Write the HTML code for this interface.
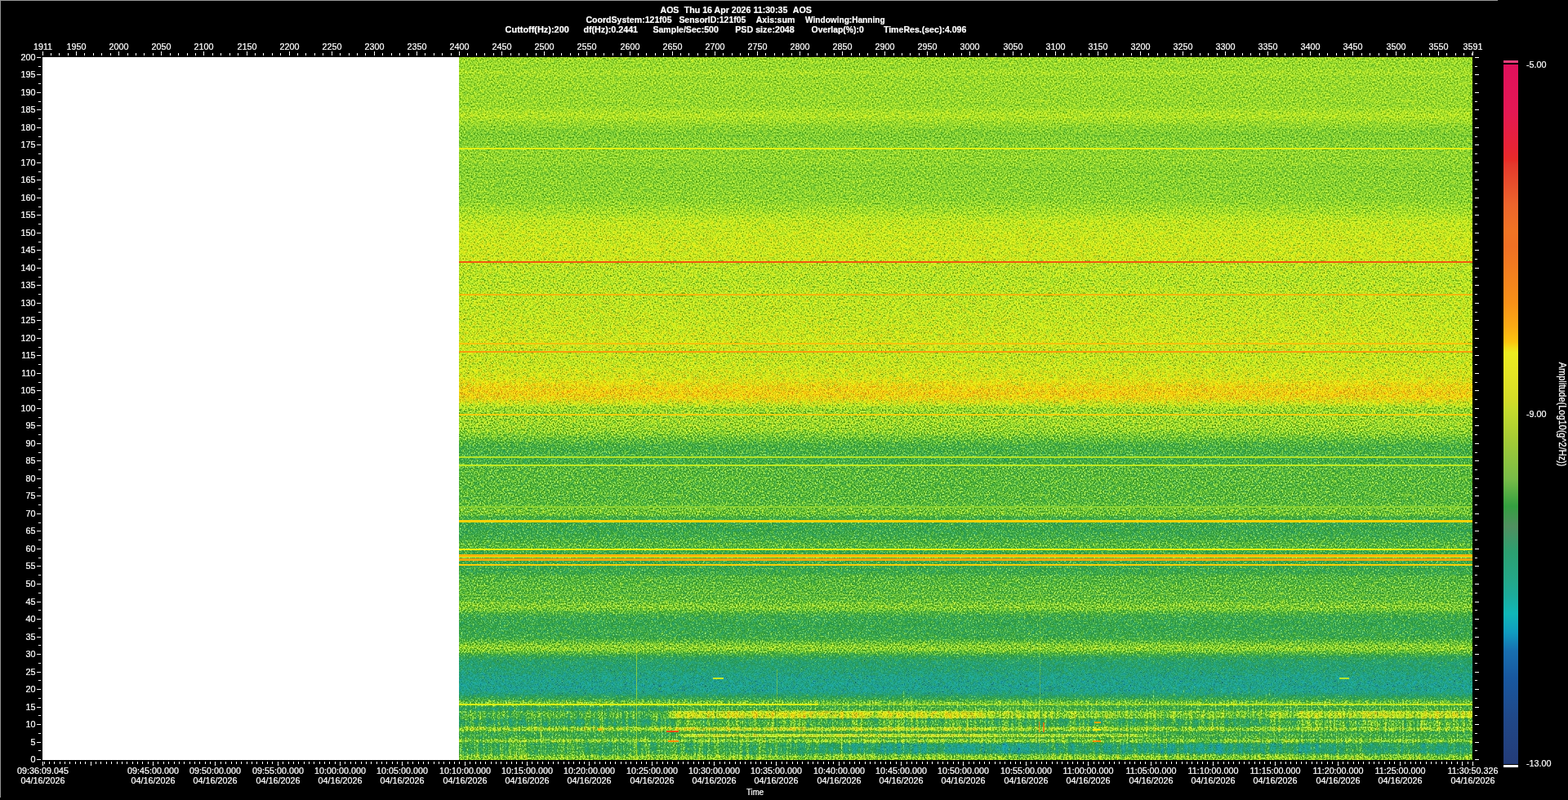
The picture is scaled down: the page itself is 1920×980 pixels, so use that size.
<!DOCTYPE html>
<html lang="en"><head><meta charset="utf-8"><title>AOS Spectrogram</title>
<style>html,body{margin:0;padding:0;background:#000;overflow:hidden}svg{display:block}text{font-family:"Liberation Sans",sans-serif;font-size:11px;fill:#fff;stroke:#fff;stroke-width:.22px}.b{font-weight:bold}.m{text-anchor:middle}.e{text-anchor:end}</style></head><body>
<svg width="1920" height="980" viewBox="0 0 1920 980">
<defs>
<linearGradient id="bg" gradientUnits="userSpaceOnUse" x1="0" y1="62" x2="0" y2="940">
<stop offset="0.0000" stop-color="#760099"/>
<stop offset="0.0091" stop-color="#76009a"/>
<stop offset="0.0262" stop-color="#75009a"/>
<stop offset="0.0308" stop-color="#77009b"/>
<stop offset="0.0376" stop-color="#75009b"/>
<stop offset="0.0774" stop-color="#74009d"/>
<stop offset="0.0911" stop-color="#78009e"/>
<stop offset="0.1025" stop-color="#73009e"/>
<stop offset="0.1173" stop-color="#6f009f"/>
<stop offset="0.1321" stop-color="#7000a0"/>
<stop offset="0.1515" stop-color="#7200a1"/>
<stop offset="0.1640" stop-color="#7000a1"/>
<stop offset="0.1913" stop-color="#7000a3"/>
<stop offset="0.2084" stop-color="#6f00a7"/>
<stop offset="0.2232" stop-color="#7000af"/>
<stop offset="0.2392" stop-color="#7200b9"/>
<stop offset="0.2711" stop-color="#6e00cc"/>
<stop offset="0.2916" stop-color="#6d00cf"/>
<stop offset="0.2995" stop-color="#6a00d0"/>
<stop offset="0.3166" stop-color="#6800d2"/>
<stop offset="0.3371" stop-color="#6800d5"/>
<stop offset="0.3451" stop-color="#6800d6"/>
<stop offset="0.3850" stop-color="#6800dc"/>
<stop offset="0.4077" stop-color="#6900df"/>
<stop offset="0.4226" stop-color="#6600e1"/>
<stop offset="0.4362" stop-color="#6600e3"/>
<stop offset="0.4556" stop-color="#6800e7"/>
<stop offset="0.4658" stop-color="#6b00ed"/>
<stop offset="0.4715" stop-color="#6d00f0"/>
<stop offset="0.4772" stop-color="#6e00f3"/>
<stop offset="0.4829" stop-color="#6b00f6"/>
<stop offset="0.4875" stop-color="#6600f9"/>
<stop offset="0.4932" stop-color="#5f00fc"/>
<stop offset="0.5000" stop-color="#5500ff"/>
<stop offset="0.5046" stop-color="#5400ff"/>
<stop offset="0.5125" stop-color="#5600ff"/>
<stop offset="0.5308" stop-color="#5400ff"/>
<stop offset="0.5399" stop-color="#4d00ff"/>
<stop offset="0.5501" stop-color="#4600ff"/>
<stop offset="0.5581" stop-color="#4400ff"/>
<stop offset="0.5649" stop-color="#4500ff"/>
<stop offset="0.5729" stop-color="#4300ff"/>
<stop offset="0.5809" stop-color="#4900ff"/>
<stop offset="0.6014" stop-color="#4900ff"/>
<stop offset="0.6298" stop-color="#4900ff"/>
<stop offset="0.6355" stop-color="#4a00ff"/>
<stop offset="0.6401" stop-color="#4e00ff"/>
<stop offset="0.6481" stop-color="#4d00ff"/>
<stop offset="0.6503" stop-color="#4300ff"/>
<stop offset="0.6538" stop-color="#4300ff"/>
<stop offset="0.6595" stop-color="#4200ff"/>
<stop offset="0.6697" stop-color="#4000ff"/>
<stop offset="0.6788" stop-color="#4200ff"/>
<stop offset="0.6856" stop-color="#4700ff"/>
<stop offset="0.6925" stop-color="#4900ff"/>
<stop offset="0.6993" stop-color="#4200ff"/>
<stop offset="0.7210" stop-color="#4100ff"/>
<stop offset="0.7301" stop-color="#4100ff"/>
<stop offset="0.7335" stop-color="#4700ff"/>
<stop offset="0.7472" stop-color="#4900ff"/>
<stop offset="0.7620" stop-color="#4900ff"/>
<stop offset="0.7688" stop-color="#4b00ff"/>
<stop offset="0.7733" stop-color="#5000ff"/>
<stop offset="0.7790" stop-color="#5000ff"/>
<stop offset="0.7836" stop-color="#4800ff"/>
<stop offset="0.7893" stop-color="#4100ff"/>
<stop offset="0.8064" stop-color="#3f00ff"/>
<stop offset="0.8200" stop-color="#4200ff"/>
<stop offset="0.8246" stop-color="#4900ff"/>
<stop offset="0.8292" stop-color="#5000ff"/>
<stop offset="0.8337" stop-color="#5300ff"/>
<stop offset="0.8371" stop-color="#5000ff"/>
<stop offset="0.8417" stop-color="#4600ff"/>
<stop offset="0.8451" stop-color="#3e00ff"/>
<stop offset="0.8519" stop-color="#3700ff"/>
<stop offset="0.8633" stop-color="#3400ff"/>
<stop offset="0.8724" stop-color="#3000ff"/>
<stop offset="0.8861" stop-color="#2d00ff"/>
<stop offset="0.8952" stop-color="#2f00ff"/>
<stop offset="0.8998" stop-color="#3700ff"/>
<stop offset="0.9043" stop-color="#3e00ff"/>
<stop offset="0.9077" stop-color="#2fffff"/>
<stop offset="0.9100" stop-color="#37ffff"/>
<stop offset="0.9146" stop-color="#2dffff"/>
<stop offset="0.9169" stop-color="#20ffff"/>
<stop offset="0.9226" stop-color="#20ffff"/>
<stop offset="0.9260" stop-color="#2dffff"/>
<stop offset="0.9282" stop-color="#33ffff"/>
<stop offset="0.9305" stop-color="#2dffff"/>
<stop offset="0.9339" stop-color="#22ffff"/>
<stop offset="0.9419" stop-color="#24ffff"/>
<stop offset="0.9442" stop-color="#35ffff"/>
<stop offset="0.9465" stop-color="#3effff"/>
<stop offset="0.9487" stop-color="#35ffff"/>
<stop offset="0.9510" stop-color="#26ffff"/>
<stop offset="0.9590" stop-color="#28ffff"/>
<stop offset="0.9613" stop-color="#33ffff"/>
<stop offset="0.9630" stop-color="#3affff"/>
<stop offset="0.9647" stop-color="#31ffff"/>
<stop offset="0.9670" stop-color="#22ffff"/>
<stop offset="0.9772" stop-color="#1effff"/>
<stop offset="0.9806" stop-color="#28ffff"/>
<stop offset="0.9841" stop-color="#38ffff"/>
<stop offset="0.9897" stop-color="#39ffff"/>
<stop offset="1.0000" stop-color="#39ffff"/>
</linearGradient>
<linearGradient id="h13" gradientUnits="userSpaceOnUse" x1="562" y1="0" x2="1803" y2="0">
<stop offset="0.0000" stop-color="#2dffff" stop-opacity="1.00"/>
<stop offset="0.2039" stop-color="#2dffff" stop-opacity="1.00"/>
<stop offset="0.2111" stop-color="#45ffff" stop-opacity="1.00"/>
<stop offset="0.5101" stop-color="#46ffff" stop-opacity="1.00"/>
<stop offset="0.5342" stop-color="#3dffff" stop-opacity="1.00"/>
<stop offset="0.6672" stop-color="#38ffff" stop-opacity="1.00"/>
<stop offset="0.6914" stop-color="#35ffff" stop-opacity="1.00"/>
<stop offset="0.7881" stop-color="#35ffff" stop-opacity="1.00"/>
<stop offset="0.8364" stop-color="#3fffff" stop-opacity="1.00"/>
<stop offset="0.9170" stop-color="#42ffff" stop-opacity="1.00"/>
<stop offset="1.0000" stop-color="#43ffff" stop-opacity="1.00"/>
</linearGradient>
<linearGradient id="h15" gradientUnits="userSpaceOnUse" x1="562" y1="0" x2="1803" y2="0">
<stop offset="0.0000" stop-color="#20ffff" stop-opacity="1.00"/>
<stop offset="0.2039" stop-color="#20ffff" stop-opacity="1.00"/>
<stop offset="0.2160" stop-color="#2bffff" stop-opacity="1.00"/>
<stop offset="0.5544" stop-color="#2dffff" stop-opacity="1.00"/>
<stop offset="0.6753" stop-color="#28ffff" stop-opacity="1.00"/>
<stop offset="1.0000" stop-color="#2dffff" stop-opacity="1.00"/>
</linearGradient>
<linearGradient id="h11" gradientUnits="userSpaceOnUse" x1="562" y1="0" x2="1803" y2="0">
<stop offset="0.0000" stop-color="#22ffff" stop-opacity="1.00"/>
<stop offset="0.2039" stop-color="#22ffff" stop-opacity="1.00"/>
<stop offset="0.2160" stop-color="#2dffff" stop-opacity="1.00"/>
<stop offset="0.5141" stop-color="#2dffff" stop-opacity="1.00"/>
<stop offset="0.5624" stop-color="#26ffff" stop-opacity="1.00"/>
<stop offset="0.7881" stop-color="#24ffff" stop-opacity="1.00"/>
<stop offset="0.8364" stop-color="#31ffff" stop-opacity="1.00"/>
<stop offset="1.0000" stop-color="#2fffff" stop-opacity="1.00"/>
</linearGradient>
<linearGradient id="h9" gradientUnits="userSpaceOnUse" x1="562" y1="0" x2="1803" y2="0">
<stop offset="0.0000" stop-color="#3affff" stop-opacity="1.00"/>
<stop offset="0.1112" stop-color="#3effff" stop-opacity="1.00"/>
<stop offset="0.2039" stop-color="#3dffff" stop-opacity="1.00"/>
<stop offset="0.2160" stop-color="#45ffff" stop-opacity="1.00"/>
<stop offset="0.5141" stop-color="#44ffff" stop-opacity="1.00"/>
<stop offset="0.5463" stop-color="#3cffff" stop-opacity="1.00"/>
<stop offset="1.0000" stop-color="#39ffff" stop-opacity="1.00"/>
</linearGradient>
<linearGradient id="h7" gradientUnits="userSpaceOnUse" x1="562" y1="0" x2="1803" y2="0">
<stop offset="0.0000" stop-color="#28ffff" stop-opacity="1.00"/>
<stop offset="0.2143" stop-color="#28ffff" stop-opacity="1.00"/>
<stop offset="0.2224" stop-color="#44ffff" stop-opacity="1.00"/>
<stop offset="0.5141" stop-color="#44ffff" stop-opacity="1.00"/>
<stop offset="0.5383" stop-color="#3effff" stop-opacity="1.00"/>
<stop offset="0.6672" stop-color="#3dffff" stop-opacity="1.00"/>
<stop offset="0.6914" stop-color="#2cffff" stop-opacity="1.00"/>
<stop offset="1.0000" stop-color="#2bffff" stop-opacity="1.00"/>
</linearGradient>
<linearGradient id="h5" gradientUnits="userSpaceOnUse" x1="562" y1="0" x2="1803" y2="0">
<stop offset="0.0000" stop-color="#39ffff" stop-opacity="1.00"/>
<stop offset="0.5544" stop-color="#3affff" stop-opacity="1.00"/>
<stop offset="0.6753" stop-color="#35ffff" stop-opacity="1.00"/>
<stop offset="1.0000" stop-color="#38ffff" stop-opacity="1.00"/>
</linearGradient>
<linearGradient id="h3" gradientUnits="userSpaceOnUse" x1="562" y1="0" x2="1803" y2="0">
<stop offset="0.0000" stop-color="#29ffff" stop-opacity="1.00"/>
<stop offset="0.3368" stop-color="#27ffff" stop-opacity="1.00"/>
<stop offset="0.3691" stop-color="#1affff" stop-opacity="1.00"/>
<stop offset="0.5463" stop-color="#17ffff" stop-opacity="1.00"/>
<stop offset="0.5866" stop-color="#20ffff" stop-opacity="1.00"/>
<stop offset="0.6753" stop-color="#1affff" stop-opacity="1.00"/>
<stop offset="0.8364" stop-color="#1affff" stop-opacity="1.00"/>
<stop offset="0.8687" stop-color="#20ffff" stop-opacity="1.00"/>
<stop offset="1.0000" stop-color="#20ffff" stop-opacity="1.00"/>
</linearGradient>
<linearGradient id="cb" gradientUnits="userSpaceOnUse" x1="0" y1="79" x2="0" y2="936">
<stop offset="0.0000" stop-color="#e0105c"/>
<stop offset="0.0677" stop-color="#e41854"/>
<stop offset="0.1202" stop-color="#e82434"/>
<stop offset="0.1365" stop-color="#e82c28"/>
<stop offset="0.1424" stop-color="#e4382c"/>
<stop offset="0.1727" stop-color="#e8502c"/>
<stop offset="0.1995" stop-color="#ec642c"/>
<stop offset="0.2380" stop-color="#f07424"/>
<stop offset="0.2602" stop-color="#f07024"/>
<stop offset="0.3396" stop-color="#f89018"/>
<stop offset="0.3746" stop-color="#faaa14"/>
<stop offset="0.3967" stop-color="#fcc410"/>
<stop offset="0.4049" stop-color="#f4dc18"/>
<stop offset="0.4119" stop-color="#ecec20"/>
<stop offset="0.4446" stop-color="#e4e424"/>
<stop offset="0.4796" stop-color="#d4dc28"/>
<stop offset="0.4912" stop-color="#c8dc2c"/>
<stop offset="0.5321" stop-color="#a8cc34"/>
<stop offset="0.5928" stop-color="#78bc48"/>
<stop offset="0.6313" stop-color="#34a040"/>
<stop offset="0.6604" stop-color="#509060"/>
<stop offset="0.6966" stop-color="#2ca070"/>
<stop offset="0.7363" stop-color="#24a888"/>
<stop offset="0.7596" stop-color="#1cac9c"/>
<stop offset="0.7853" stop-color="#10b8b8"/>
<stop offset="0.8121" stop-color="#109cc0"/>
<stop offset="0.8378" stop-color="#1870b0"/>
<stop offset="0.8763" stop-color="#1858a0"/>
<stop offset="0.9347" stop-color="#204888"/>
<stop offset="1.0000" stop-color="#243c78"/>
</linearGradient>
<filter id="sp" filterUnits="userSpaceOnUse" x="554" y="62" width="1257" height="877" color-interpolation-filters="sRGB">
<feTurbulence type="fractalNoise" baseFrequency="0.57 0.53" numOctaves="2" seed="7" result="nh"/>
<feColorMatrix in="nh" type="matrix" values="1 0 0 0 0  1 0 0 0 0  1 0 0 0 0  0 0 0 0 1" result="nh0"/>
<feComponentTransfer in="nh0" result="n1"><feFuncR type="gamma" exponent="0.6"/><feFuncG type="gamma" exponent="0.6"/><feFuncB type="gamma" exponent="0.6"/></feComponentTransfer>
<feColorMatrix in="SourceGraphic" type="matrix" values="1 0 0 0 0  1 0 0 0 0  1 0 0 0 0  0 0 0 0 1" result="val"/>
<feColorMatrix in="SourceGraphic" type="matrix" values="0 1 0 0 0  0 1 0 0 0  0 1 0 0 0  0 0 0 0 1" result="amp"/>
<feTurbulence type="fractalNoise" baseFrequency="0.5 0.03" numOctaves="2" seed="23" result="st"/>
<feColorMatrix in="st" type="matrix" values="1 0 0 0 0  1 0 0 0 0  1 0 0 0 0  0 0 0 0 1" result="st1"/>
<feComposite in="amp" in2="st1" operator="arithmetic" k1="1" k2="0" k3="0" k4="0" result="p"/>
<feComposite in="val" in2="p" operator="arithmetic" k1="0" k2="1" k3="0.2000" k4="0" result="t2"/>
<feColorMatrix in="SourceGraphic" type="matrix" values="0 0 1 0 0  0 0 1 0 0  0 0 1 0 0  0 0 0 0 1" result="na"/>
<feComposite in="na" in2="n1" operator="arithmetic" k1="1" k2="0" k3="0" k4="0" result="q"/>
<feComposite in="t2" in2="q" operator="arithmetic" k1="0" k2="1" k3="0.4833" k4="0" result="v"/>
<feComponentTransfer in="v" result="c"><feFuncR type="table" tableValues="0.141 0.141 0.141 0.141 0.141 0.141 0.141 0.141 0.141 0.141 0.141 0.141 0.141 0.141 0.141 0.141 0.141 0.141 0.141 0.141 0.141 0.141 0.141 0.141 0.141 0.141 0.141 0.141 0.141 0.141 0.141 0.141 0.141 0.141 0.141 0.141 0.141 0.141 0.141 0.141 0.141 0.141 0.141 0.141 0.141 0.141 0.141 0.141 0.141 0.141 0.141 0.141 0.141 0.141 0.141 0.141 0.141 0.141 0.141 0.141 0.141 0.141 0.141 0.141 0.141 0.141 0.141 0.141 0.141 0.141 0.141 0.141 0.141 0.141 0.141 0.141 0.141 0.141 0.141 0.141 0.141 0.136 0.132 0.127 0.122 0.118 0.113 0.108 0.104 0.099 0.094 0.094 0.094 0.094 0.094 0.094 0.094 0.094 0.094 0.094 0.094 0.093 0.092 0.091 0.090 0.089 0.088 0.087 0.086 0.090 0.094 0.098 0.102 0.106 0.110 0.114 0.118 0.120 0.123 0.125 0.128 0.131 0.133 0.136 0.139 0.141 0.144 0.146 0.149 0.152 0.154 0.157 0.159 0.162 0.165 0.174 0.183 0.192 0.201 0.210 0.220 0.241 0.263 0.284 0.306 0.327 0.349 0.371 0.392 0.417 0.441 0.466 0.490 0.515 0.539 0.564 0.588 0.616 0.643 0.671 0.698 0.722 0.745 0.769 0.792 0.817 0.842 0.867 0.892 0.916 0.941 0.949 0.957 0.965 0.973 0.976 0.980 0.984 0.988 0.988 0.988 0.988 0.988 0.988 0.988 0.987 0.986 0.984 0.983 0.982 0.980 0.977 0.974 0.971 0.967 0.964 0.961 0.958 0.954 0.951 0.948 0.944 0.941 0.939 0.938 0.936 0.934 0.932 0.931 0.929 0.927 0.925 0.924 0.922 0.920 0.919 0.917 0.915 0.913 0.912 0.910 0.908 0.907 0.905 0.904 0.902 0.900 0.899 0.897 0.896 0.894 0.893 0.891 0.889 0.888 0.886 0.885 0.883 0.882 0.880 0.878"/><feFuncG type="table" tableValues="0.235 0.235 0.235 0.235 0.235 0.235 0.235 0.235 0.235 0.235 0.235 0.235 0.235 0.235 0.235 0.235 0.235 0.235 0.235 0.235 0.235 0.235 0.235 0.235 0.235 0.235 0.235 0.235 0.235 0.235 0.235 0.235 0.235 0.235 0.235 0.235 0.235 0.235 0.235 0.235 0.235 0.235 0.235 0.235 0.235 0.235 0.235 0.235 0.235 0.235 0.235 0.235 0.235 0.235 0.235 0.235 0.235 0.235 0.235 0.235 0.235 0.235 0.235 0.235 0.235 0.235 0.235 0.235 0.235 0.235 0.235 0.235 0.235 0.235 0.235 0.235 0.235 0.235 0.235 0.235 0.235 0.249 0.264 0.278 0.292 0.306 0.320 0.334 0.348 0.362 0.376 0.390 0.403 0.416 0.430 0.443 0.456 0.470 0.483 0.496 0.510 0.533 0.557 0.580 0.604 0.627 0.651 0.675 0.698 0.695 0.692 0.689 0.686 0.683 0.680 0.677 0.675 0.669 0.664 0.659 0.654 0.648 0.643 0.635 0.627 0.620 0.612 0.604 0.596 0.593 0.591 0.588 0.586 0.583 0.580 0.592 0.604 0.616 0.627 0.639 0.651 0.664 0.676 0.689 0.702 0.715 0.727 0.740 0.753 0.765 0.776 0.788 0.800 0.812 0.824 0.835 0.847 0.859 0.871 0.882 0.894 0.904 0.914 0.924 0.933 0.937 0.941 0.945 0.949 0.953 0.957 0.941 0.925 0.910 0.894 0.871 0.847 0.824 0.800 0.776 0.753 0.729 0.706 0.682 0.659 0.634 0.609 0.584 0.559 0.535 0.510 0.493 0.477 0.461 0.444 0.428 0.412 0.395 0.379 0.363 0.346 0.330 0.314 0.305 0.296 0.288 0.279 0.270 0.261 0.253 0.244 0.235 0.227 0.218 0.209 0.200 0.192 0.183 0.174 0.166 0.157 0.152 0.147 0.143 0.138 0.133 0.129 0.124 0.119 0.115 0.110 0.105 0.100 0.096 0.091 0.086 0.082 0.077 0.072 0.067 0.063"/><feFuncB type="table" tableValues="0.471 0.471 0.471 0.471 0.471 0.471 0.471 0.471 0.471 0.471 0.471 0.471 0.471 0.471 0.471 0.471 0.471 0.471 0.471 0.471 0.471 0.471 0.471 0.471 0.471 0.471 0.471 0.471 0.471 0.471 0.471 0.471 0.471 0.471 0.471 0.471 0.471 0.471 0.471 0.471 0.471 0.471 0.471 0.471 0.471 0.471 0.471 0.471 0.471 0.471 0.471 0.471 0.471 0.471 0.471 0.471 0.471 0.471 0.471 0.471 0.471 0.471 0.471 0.471 0.471 0.471 0.471 0.471 0.471 0.471 0.471 0.471 0.471 0.471 0.471 0.471 0.471 0.471 0.471 0.471 0.471 0.488 0.505 0.522 0.540 0.557 0.574 0.591 0.609 0.626 0.643 0.651 0.659 0.667 0.675 0.682 0.690 0.698 0.706 0.714 0.722 0.726 0.731 0.736 0.741 0.746 0.751 0.756 0.761 0.743 0.725 0.708 0.690 0.673 0.655 0.637 0.620 0.604 0.588 0.573 0.557 0.541 0.525 0.503 0.481 0.459 0.437 0.414 0.392 0.370 0.348 0.325 0.303 0.281 0.259 0.254 0.248 0.243 0.238 0.233 0.227 0.225 0.224 0.222 0.220 0.218 0.216 0.214 0.212 0.209 0.206 0.203 0.200 0.197 0.194 0.191 0.188 0.180 0.173 0.165 0.157 0.147 0.137 0.127 0.118 0.107 0.097 0.086 0.076 0.065 0.055 0.049 0.043 0.037 0.031 0.031 0.031 0.031 0.031 0.033 0.034 0.035 0.037 0.038 0.039 0.041 0.042 0.043 0.044 0.046 0.047 0.048 0.050 0.051 0.052 0.054 0.055 0.056 0.058 0.059 0.060 0.061 0.063 0.068 0.073 0.078 0.084 0.089 0.094 0.099 0.105 0.110 0.115 0.120 0.125 0.131 0.136 0.141 0.146 0.152 0.157 0.167 0.177 0.187 0.198 0.208 0.218 0.228 0.238 0.249 0.259 0.269 0.279 0.289 0.300 0.310 0.320 0.330 0.340 0.351 0.361"/></feComponentTransfer>
<feGaussianBlur in="c" stdDeviation="1.1" result="b"/>
<feColorMatrix in="c" type="matrix" values="0.299 0.587 0.114 0 0  0.299 0.587 0.114 0 0  0.299 0.587 0.114 0 0  0 0 0 0 1" result="yc"/>
<feColorMatrix in="b" type="matrix" values="0.299 0.587 0.114 0 0  0.299 0.587 0.114 0 0  0.299 0.587 0.114 0 0  0 0 0 0 1" result="yb"/>
<feComposite in="yc" in2="yb" operator="arithmetic" k1="0" k2="1.000" k3="-1.000" k4="0.5" result="d"/>
<feComposite in="b" in2="d" operator="arithmetic" k1="0" k2="1" k3="1" k4="-0.5"/>
</filter>
<clipPath id="cl"><rect x="562" y="70" width="1241" height="861"/></clipPath>
</defs>
<rect width="1920" height="980" fill="#000"/>
<rect x="0" y="0" width="1834" height="1" fill="#989898"/><rect x="0" y="0" width="1" height="977" fill="#929292"/>
<rect x="52" y="70" width="1751" height="861" fill="#fff"/>
<g clip-path="url(#cl)"><g filter="url(#sp)" shape-rendering="crispEdges">
<rect x="554" y="62" width="1257" height="877" fill="url(#bg)"/>
<rect x="554.0" y="866.0" width="1257.0" height="6.0" fill="url(#h15)"/>
<rect x="554.0" y="871.0" width="1257.0" height="9.0" fill="url(#h13)"/>
<rect x="554.0" y="881.5" width="1257.0" height="7.5" fill="url(#h11)"/>
<rect x="554.0" y="891.0" width="1257.0" height="4.0" fill="url(#h9)"/>
<rect x="554.0" y="898.5" width="1257.0" height="4.0" fill="url(#h7)"/>
<rect x="554.0" y="906.0" width="1257.0" height="3.0" fill="url(#h5)"/>
<rect x="554.0" y="911.0" width="1257.0" height="12.0" fill="url(#h3)"/>
<rect x="737.0" y="856.0" width="1.0" height="80.0" fill="#40ffff" fill-opacity="0.70"/>
<rect x="662.0" y="856.0" width="1.0" height="80.0" fill="#40ffff" fill-opacity="0.70"/>
<rect x="632.0" y="858.0" width="1.0" height="75.0" fill="#3cffff" fill-opacity="0.60"/>
<rect x="684.0" y="862.0" width="1.0" height="70.0" fill="#39ffff" fill-opacity="0.60"/>
<rect x="1106.0" y="846.0" width="1.0" height="90.0" fill="#5900ff" fill-opacity="0.70"/>
<rect x="1115.0" y="850.0" width="1.0" height="85.0" fill="#5900ff" fill-opacity="0.60"/>
<rect x="1412.0" y="845.0" width="1.0" height="90.0" fill="#5500ff" fill-opacity="0.60"/>
<rect x="1550.0" y="850.0" width="1.0" height="85.0" fill="#5300ff" fill-opacity="0.50"/>
<rect x="1030.0" y="905.0" width="1.5" height="26.0" fill="#40ffff" fill-opacity="0.60"/>
<rect x="1840.0" y="700.0" width="1.0" height="1.0" fill="#5900ff" fill-opacity="0.00"/>
<rect x="1686.0" y="884.0" width="1.4" height="10.0" fill="#4affff" fill-opacity="0.55"/>
<rect x="1694.5" y="885.0" width="1.4" height="11.0" fill="#4affff" fill-opacity="0.55"/>
<rect x="1703.0" y="884.0" width="1.4" height="12.0" fill="#4affff" fill-opacity="0.55"/>
<rect x="1708.5" y="885.0" width="1.4" height="10.0" fill="#4affff" fill-opacity="0.55"/>
<rect x="1717.0" y="884.0" width="1.4" height="11.0" fill="#4affff" fill-opacity="0.55"/>
<rect x="1725.5" y="885.0" width="1.4" height="12.0" fill="#4affff" fill-opacity="0.55"/>
<rect x="1731.0" y="884.0" width="1.4" height="10.0" fill="#4affff" fill-opacity="0.55"/>
<rect x="1739.5" y="885.0" width="1.4" height="11.0" fill="#4affff" fill-opacity="0.55"/>
<rect x="1748.0" y="884.0" width="1.4" height="12.0" fill="#4affff" fill-opacity="0.55"/>
<rect x="1753.5" y="885.0" width="1.4" height="10.0" fill="#4affff" fill-opacity="0.55"/>
<rect x="1762.0" y="884.0" width="1.4" height="11.0" fill="#4affff" fill-opacity="0.55"/>
<rect x="1770.5" y="885.0" width="1.4" height="12.0" fill="#4affff" fill-opacity="0.55"/>
<rect x="1776.0" y="884.0" width="1.4" height="10.0" fill="#4affff" fill-opacity="0.55"/>
<rect x="1784.5" y="885.0" width="1.4" height="11.0" fill="#4affff" fill-opacity="0.55"/>
<rect x="1793.0" y="884.0" width="1.4" height="12.0" fill="#4affff" fill-opacity="0.55"/>
<rect x="1424.0" y="841.0" width="1.0" height="7.0" fill="#5700ff" fill-opacity="0.50"/>
<rect x="1436.5" y="842.0" width="1.0" height="9.0" fill="#5700ff" fill-opacity="0.50"/>
<rect x="1449.0" y="843.0" width="1.0" height="7.0" fill="#5700ff" fill-opacity="0.50"/>
<rect x="1461.5" y="841.0" width="1.0" height="9.0" fill="#5700ff" fill-opacity="0.50"/>
<rect x="1470.0" y="842.0" width="1.0" height="7.0" fill="#5700ff" fill-opacity="0.50"/>
<rect x="1482.5" y="843.0" width="1.0" height="9.0" fill="#5700ff" fill-opacity="0.50"/>
<rect x="1495.0" y="841.0" width="1.0" height="7.0" fill="#5700ff" fill-opacity="0.50"/>
<rect x="1507.5" y="842.0" width="1.0" height="9.0" fill="#5700ff" fill-opacity="0.50"/>
<rect x="1516.0" y="843.0" width="1.0" height="7.0" fill="#5700ff" fill-opacity="0.50"/>
<rect x="1528.5" y="841.0" width="1.0" height="9.0" fill="#5700ff" fill-opacity="0.50"/>
<rect x="1541.0" y="842.0" width="1.0" height="7.0" fill="#5700ff" fill-opacity="0.50"/>
<rect x="1553.5" y="843.0" width="1.0" height="9.0" fill="#5700ff" fill-opacity="0.50"/>
</g></g>
<g shape-rendering="crispEdges">
<rect x="562.0" y="181.3" width="1241.0" height="1.4" fill="#eaf311" fill-opacity="0.90"/>
<rect x="562.0" y="320.1" width="1241.0" height="2.2" fill="#f2580f"/>
<rect x="562.0" y="360.2" width="1241.0" height="1.6" fill="#fcb409" fill-opacity="0.90"/>
<rect x="562.0" y="420.4" width="1241.0" height="1.2" fill="#fcc009" fill-opacity="0.85"/>
<rect x="562.0" y="430.1" width="1241.0" height="1.8" fill="#fb9b0b"/>
<rect x="562.0" y="506.6" width="1241.0" height="2.8" fill="#fcce08" fill-opacity="0.88"/>
<rect x="562.0" y="558.9" width="1241.0" height="1.6" fill="#b2e428"/>
<rect x="562.0" y="568.7" width="1241.0" height="2.2" fill="#bee923"/>
<rect x="562.0" y="620.4" width="1241.0" height="1.2" fill="#96d830" fill-opacity="0.70"/>
<rect x="562.0" y="636.8" width="1241.0" height="3.0" fill="#fbd208"/>
<rect x="562.0" y="671.7" width="1241.0" height="2.6" fill="#f0f40e"/>
<rect x="562.0" y="679.3" width="1241.0" height="2.2" fill="#fcb409"/>
<rect x="562.0" y="682.2" width="1241.0" height="1.0" fill="#f0f40e"/>
<rect x="562.0" y="684.1" width="1241.0" height="2.6" fill="#fca80a"/>
<rect x="562.0" y="690.6" width="1241.0" height="2.8" fill="#fcce08"/>
<rect x="562.0" y="728.0" width="1241.0" height="1.2" fill="#96d830" fill-opacity="0.40"/>
<rect x="562.0" y="862.0" width="440.0" height="2.0" fill="#e3f213" fill-opacity="0.90"/>
<rect x="1002.0" y="862.0" width="450.0" height="2.0" fill="#caee1e" fill-opacity="0.45"/>
<rect x="1452.0" y="862.0" width="351.0" height="2.0" fill="#d7f019" fill-opacity="0.75"/>
<rect x="779.0" y="788.0" width="1.0" height="143.0" fill="#bee923" fill-opacity="0.60"/>
<rect x="951.0" y="820.0" width="1.0" height="111.0" fill="#b2e428" fill-opacity="0.40"/>
<rect x="1273.0" y="714.0" width="1.0" height="217.0" fill="#a4de2c" fill-opacity="0.30"/>
<rect x="816.0" y="894.8" width="15.0" height="2.6" fill="#ef4c13"/>
<rect x="818.0" y="906.5" width="13.0" height="2.0" fill="#fb8f0b"/>
<rect x="1338.0" y="906.5" width="10.0" height="2.0" fill="#fb8f0b"/>
<rect x="1340.0" y="884.0" width="8.0" height="2.0" fill="#fca80a"/>
<rect x="1338.0" y="893.0" width="10.0" height="2.0" fill="#f4ec0b"/>
<rect x="873.0" y="830.4" width="13.0" height="1.8" fill="#d7f019" fill-opacity="0.90"/>
<rect x="1640.0" y="830.4" width="12.0" height="1.8" fill="#caee1e" fill-opacity="0.85"/>
<rect x="732.0" y="891.5" width="5.0" height="3.5" fill="#fcb409" fill-opacity="0.70"/>
<rect x="1271.5" y="884.0" width="1.5" height="13.0" fill="#f7710d" fill-opacity="0.75"/>
<rect x="1277.0" y="885.0" width="1.5" height="12.0" fill="#f7710d" fill-opacity="0.75"/>
</g>
<g fill="#fff" shape-rendering="crispEdges">
<rect x="62" y="65" width="1" height="3"/>
<rect x="72" y="65" width="1" height="3"/>
<rect x="83" y="65" width="1" height="3"/>
<rect x="103" y="65" width="1" height="3"/>
<rect x="114" y="65" width="1" height="3"/>
<rect x="124" y="65" width="1" height="3"/>
<rect x="135" y="65" width="1" height="3"/>
<rect x="156" y="65" width="1" height="3"/>
<rect x="166" y="65" width="1" height="3"/>
<rect x="176" y="65" width="1" height="3"/>
<rect x="187" y="65" width="1" height="3"/>
<rect x="208" y="65" width="1" height="3"/>
<rect x="218" y="65" width="1" height="3"/>
<rect x="229" y="65" width="1" height="3"/>
<rect x="239" y="65" width="1" height="3"/>
<rect x="260" y="65" width="1" height="3"/>
<rect x="270" y="65" width="1" height="3"/>
<rect x="281" y="65" width="1" height="3"/>
<rect x="291" y="65" width="1" height="3"/>
<rect x="312" y="65" width="1" height="3"/>
<rect x="322" y="65" width="1" height="3"/>
<rect x="333" y="65" width="1" height="3"/>
<rect x="343" y="65" width="1" height="3"/>
<rect x="364" y="65" width="1" height="3"/>
<rect x="374" y="65" width="1" height="3"/>
<rect x="385" y="65" width="1" height="3"/>
<rect x="395" y="65" width="1" height="3"/>
<rect x="416" y="65" width="1" height="3"/>
<rect x="427" y="65" width="1" height="3"/>
<rect x="437" y="65" width="1" height="3"/>
<rect x="447" y="65" width="1" height="3"/>
<rect x="468" y="65" width="1" height="3"/>
<rect x="479" y="65" width="1" height="3"/>
<rect x="489" y="65" width="1" height="3"/>
<rect x="500" y="65" width="1" height="3"/>
<rect x="520" y="65" width="1" height="3"/>
<rect x="531" y="65" width="1" height="3"/>
<rect x="541" y="65" width="1" height="3"/>
<rect x="552" y="65" width="1" height="3"/>
<rect x="572" y="65" width="1" height="3"/>
<rect x="583" y="65" width="1" height="3"/>
<rect x="593" y="65" width="1" height="3"/>
<rect x="604" y="65" width="1" height="3"/>
<rect x="625" y="65" width="1" height="3"/>
<rect x="635" y="65" width="1" height="3"/>
<rect x="645" y="65" width="1" height="3"/>
<rect x="656" y="65" width="1" height="3"/>
<rect x="677" y="65" width="1" height="3"/>
<rect x="687" y="65" width="1" height="3"/>
<rect x="698" y="65" width="1" height="3"/>
<rect x="708" y="65" width="1" height="3"/>
<rect x="729" y="65" width="1" height="3"/>
<rect x="739" y="65" width="1" height="3"/>
<rect x="750" y="65" width="1" height="3"/>
<rect x="760" y="65" width="1" height="3"/>
<rect x="781" y="65" width="1" height="3"/>
<rect x="791" y="65" width="1" height="3"/>
<rect x="802" y="65" width="1" height="3"/>
<rect x="812" y="65" width="1" height="3"/>
<rect x="833" y="65" width="1" height="3"/>
<rect x="843" y="65" width="1" height="3"/>
<rect x="854" y="65" width="1" height="3"/>
<rect x="864" y="65" width="1" height="3"/>
<rect x="885" y="65" width="1" height="3"/>
<rect x="896" y="65" width="1" height="3"/>
<rect x="906" y="65" width="1" height="3"/>
<rect x="916" y="65" width="1" height="3"/>
<rect x="937" y="65" width="1" height="3"/>
<rect x="948" y="65" width="1" height="3"/>
<rect x="958" y="65" width="1" height="3"/>
<rect x="969" y="65" width="1" height="3"/>
<rect x="989" y="65" width="1" height="3"/>
<rect x="1000" y="65" width="1" height="3"/>
<rect x="1010" y="65" width="1" height="3"/>
<rect x="1021" y="65" width="1" height="3"/>
<rect x="1042" y="65" width="1" height="3"/>
<rect x="1052" y="65" width="1" height="3"/>
<rect x="1062" y="65" width="1" height="3"/>
<rect x="1073" y="65" width="1" height="3"/>
<rect x="1094" y="65" width="1" height="3"/>
<rect x="1104" y="65" width="1" height="3"/>
<rect x="1114" y="65" width="1" height="3"/>
<rect x="1125" y="65" width="1" height="3"/>
<rect x="1146" y="65" width="1" height="3"/>
<rect x="1156" y="65" width="1" height="3"/>
<rect x="1167" y="65" width="1" height="3"/>
<rect x="1177" y="65" width="1" height="3"/>
<rect x="1198" y="65" width="1" height="3"/>
<rect x="1208" y="65" width="1" height="3"/>
<rect x="1219" y="65" width="1" height="3"/>
<rect x="1229" y="65" width="1" height="3"/>
<rect x="1250" y="65" width="1" height="3"/>
<rect x="1260" y="65" width="1" height="3"/>
<rect x="1271" y="65" width="1" height="3"/>
<rect x="1281" y="65" width="1" height="3"/>
<rect x="1302" y="65" width="1" height="3"/>
<rect x="1312" y="65" width="1" height="3"/>
<rect x="1323" y="65" width="1" height="3"/>
<rect x="1333" y="65" width="1" height="3"/>
<rect x="1354" y="65" width="1" height="3"/>
<rect x="1365" y="65" width="1" height="3"/>
<rect x="1375" y="65" width="1" height="3"/>
<rect x="1385" y="65" width="1" height="3"/>
<rect x="1406" y="65" width="1" height="3"/>
<rect x="1417" y="65" width="1" height="3"/>
<rect x="1427" y="65" width="1" height="3"/>
<rect x="1438" y="65" width="1" height="3"/>
<rect x="1458" y="65" width="1" height="3"/>
<rect x="1469" y="65" width="1" height="3"/>
<rect x="1479" y="65" width="1" height="3"/>
<rect x="1490" y="65" width="1" height="3"/>
<rect x="1511" y="65" width="1" height="3"/>
<rect x="1521" y="65" width="1" height="3"/>
<rect x="1531" y="65" width="1" height="3"/>
<rect x="1542" y="65" width="1" height="3"/>
<rect x="1563" y="65" width="1" height="3"/>
<rect x="1573" y="65" width="1" height="3"/>
<rect x="1583" y="65" width="1" height="3"/>
<rect x="1594" y="65" width="1" height="3"/>
<rect x="1615" y="65" width="1" height="3"/>
<rect x="1625" y="65" width="1" height="3"/>
<rect x="1636" y="65" width="1" height="3"/>
<rect x="1646" y="65" width="1" height="3"/>
<rect x="1667" y="65" width="1" height="3"/>
<rect x="1677" y="65" width="1" height="3"/>
<rect x="1688" y="65" width="1" height="3"/>
<rect x="1698" y="65" width="1" height="3"/>
<rect x="1719" y="65" width="1" height="3"/>
<rect x="1729" y="65" width="1" height="3"/>
<rect x="1740" y="65" width="1" height="3"/>
<rect x="1750" y="65" width="1" height="3"/>
<rect x="1771" y="65" width="1" height="3"/>
<rect x="1782" y="65" width="1" height="3"/>
<rect x="1792" y="65" width="1" height="3"/>
<rect x="1802" y="65" width="1" height="3"/>
<rect x="52" y="63" width="1" height="5"/>
<rect x="93" y="63" width="1" height="5"/>
<rect x="145" y="63" width="1" height="5"/>
<rect x="197" y="63" width="1" height="5"/>
<rect x="249" y="63" width="1" height="5"/>
<rect x="302" y="63" width="1" height="5"/>
<rect x="354" y="63" width="1" height="5"/>
<rect x="406" y="63" width="1" height="5"/>
<rect x="458" y="63" width="1" height="5"/>
<rect x="510" y="63" width="1" height="5"/>
<rect x="562" y="63" width="1" height="5"/>
<rect x="614" y="63" width="1" height="5"/>
<rect x="666" y="63" width="1" height="5"/>
<rect x="718" y="63" width="1" height="5"/>
<rect x="771" y="63" width="1" height="5"/>
<rect x="823" y="63" width="1" height="5"/>
<rect x="875" y="63" width="1" height="5"/>
<rect x="927" y="63" width="1" height="5"/>
<rect x="979" y="63" width="1" height="5"/>
<rect x="1031" y="63" width="1" height="5"/>
<rect x="1083" y="63" width="1" height="5"/>
<rect x="1135" y="63" width="1" height="5"/>
<rect x="1187" y="63" width="1" height="5"/>
<rect x="1240" y="63" width="1" height="5"/>
<rect x="1292" y="63" width="1" height="5"/>
<rect x="1344" y="63" width="1" height="5"/>
<rect x="1396" y="63" width="1" height="5"/>
<rect x="1448" y="63" width="1" height="5"/>
<rect x="1500" y="63" width="1" height="5"/>
<rect x="1552" y="63" width="1" height="5"/>
<rect x="1604" y="63" width="1" height="5"/>
<rect x="1656" y="63" width="1" height="5"/>
<rect x="1709" y="63" width="1" height="5"/>
<rect x="1761" y="63" width="1" height="5"/>
<rect x="1803" y="63" width="1" height="5"/>
<rect x="54" y="933" width="1" height="3"/>
<rect x="60" y="933" width="1" height="3"/>
<rect x="66" y="933" width="1" height="3"/>
<rect x="73" y="933" width="1" height="3"/>
<rect x="79" y="933" width="1" height="3"/>
<rect x="85" y="933" width="1" height="3"/>
<rect x="92" y="933" width="1" height="3"/>
<rect x="98" y="933" width="1" height="3"/>
<rect x="104" y="933" width="1" height="3"/>
<rect x="111" y="933" width="1" height="5"/>
<rect x="117" y="933" width="1" height="3"/>
<rect x="123" y="933" width="1" height="3"/>
<rect x="130" y="933" width="1" height="3"/>
<rect x="136" y="933" width="1" height="3"/>
<rect x="143" y="933" width="1" height="3"/>
<rect x="149" y="933" width="1" height="3"/>
<rect x="155" y="933" width="1" height="3"/>
<rect x="162" y="933" width="1" height="3"/>
<rect x="168" y="933" width="1" height="3"/>
<rect x="174" y="933" width="1" height="3"/>
<rect x="181" y="933" width="1" height="3"/>
<rect x="187" y="933" width="1" height="5"/>
<rect x="193" y="933" width="1" height="3"/>
<rect x="200" y="933" width="1" height="3"/>
<rect x="206" y="933" width="1" height="3"/>
<rect x="213" y="933" width="1" height="3"/>
<rect x="219" y="933" width="1" height="3"/>
<rect x="225" y="933" width="1" height="3"/>
<rect x="232" y="933" width="1" height="3"/>
<rect x="238" y="933" width="1" height="3"/>
<rect x="244" y="933" width="1" height="3"/>
<rect x="251" y="933" width="1" height="3"/>
<rect x="257" y="933" width="1" height="3"/>
<rect x="263" y="933" width="1" height="5"/>
<rect x="270" y="933" width="1" height="3"/>
<rect x="276" y="933" width="1" height="3"/>
<rect x="283" y="933" width="1" height="3"/>
<rect x="289" y="933" width="1" height="3"/>
<rect x="295" y="933" width="1" height="3"/>
<rect x="302" y="933" width="1" height="3"/>
<rect x="308" y="933" width="1" height="3"/>
<rect x="314" y="933" width="1" height="3"/>
<rect x="321" y="933" width="1" height="3"/>
<rect x="327" y="933" width="1" height="3"/>
<rect x="333" y="933" width="1" height="3"/>
<rect x="340" y="933" width="1" height="5"/>
<rect x="346" y="933" width="1" height="3"/>
<rect x="353" y="933" width="1" height="3"/>
<rect x="359" y="933" width="1" height="3"/>
<rect x="365" y="933" width="1" height="3"/>
<rect x="372" y="933" width="1" height="3"/>
<rect x="378" y="933" width="1" height="3"/>
<rect x="384" y="933" width="1" height="3"/>
<rect x="391" y="933" width="1" height="3"/>
<rect x="397" y="933" width="1" height="3"/>
<rect x="403" y="933" width="1" height="3"/>
<rect x="410" y="933" width="1" height="3"/>
<rect x="416" y="933" width="1" height="5"/>
<rect x="422" y="933" width="1" height="3"/>
<rect x="429" y="933" width="1" height="3"/>
<rect x="435" y="933" width="1" height="3"/>
<rect x="442" y="933" width="1" height="3"/>
<rect x="448" y="933" width="1" height="3"/>
<rect x="454" y="933" width="1" height="3"/>
<rect x="461" y="933" width="1" height="3"/>
<rect x="467" y="933" width="1" height="3"/>
<rect x="473" y="933" width="1" height="3"/>
<rect x="480" y="933" width="1" height="3"/>
<rect x="486" y="933" width="1" height="3"/>
<rect x="492" y="933" width="1" height="5"/>
<rect x="499" y="933" width="1" height="3"/>
<rect x="505" y="933" width="1" height="3"/>
<rect x="512" y="933" width="1" height="3"/>
<rect x="518" y="933" width="1" height="3"/>
<rect x="524" y="933" width="1" height="3"/>
<rect x="531" y="933" width="1" height="3"/>
<rect x="537" y="933" width="1" height="3"/>
<rect x="543" y="933" width="1" height="3"/>
<rect x="550" y="933" width="1" height="3"/>
<rect x="556" y="933" width="1" height="3"/>
<rect x="562" y="933" width="1" height="3"/>
<rect x="569" y="933" width="1" height="5"/>
<rect x="575" y="933" width="1" height="3"/>
<rect x="582" y="933" width="1" height="3"/>
<rect x="588" y="933" width="1" height="3"/>
<rect x="594" y="933" width="1" height="3"/>
<rect x="601" y="933" width="1" height="3"/>
<rect x="607" y="933" width="1" height="3"/>
<rect x="613" y="933" width="1" height="3"/>
<rect x="620" y="933" width="1" height="3"/>
<rect x="626" y="933" width="1" height="3"/>
<rect x="632" y="933" width="1" height="3"/>
<rect x="639" y="933" width="1" height="3"/>
<rect x="645" y="933" width="1" height="5"/>
<rect x="651" y="933" width="1" height="3"/>
<rect x="658" y="933" width="1" height="3"/>
<rect x="664" y="933" width="1" height="3"/>
<rect x="671" y="933" width="1" height="3"/>
<rect x="677" y="933" width="1" height="3"/>
<rect x="683" y="933" width="1" height="3"/>
<rect x="690" y="933" width="1" height="3"/>
<rect x="696" y="933" width="1" height="3"/>
<rect x="702" y="933" width="1" height="3"/>
<rect x="709" y="933" width="1" height="3"/>
<rect x="715" y="933" width="1" height="3"/>
<rect x="721" y="933" width="1" height="5"/>
<rect x="728" y="933" width="1" height="3"/>
<rect x="734" y="933" width="1" height="3"/>
<rect x="741" y="933" width="1" height="3"/>
<rect x="747" y="933" width="1" height="3"/>
<rect x="753" y="933" width="1" height="3"/>
<rect x="760" y="933" width="1" height="3"/>
<rect x="766" y="933" width="1" height="3"/>
<rect x="772" y="933" width="1" height="3"/>
<rect x="779" y="933" width="1" height="3"/>
<rect x="785" y="933" width="1" height="3"/>
<rect x="791" y="933" width="1" height="3"/>
<rect x="798" y="933" width="1" height="5"/>
<rect x="804" y="933" width="1" height="3"/>
<rect x="811" y="933" width="1" height="3"/>
<rect x="817" y="933" width="1" height="3"/>
<rect x="823" y="933" width="1" height="3"/>
<rect x="830" y="933" width="1" height="3"/>
<rect x="836" y="933" width="1" height="3"/>
<rect x="842" y="933" width="1" height="3"/>
<rect x="849" y="933" width="1" height="3"/>
<rect x="855" y="933" width="1" height="3"/>
<rect x="861" y="933" width="1" height="3"/>
<rect x="868" y="933" width="1" height="3"/>
<rect x="874" y="933" width="1" height="5"/>
<rect x="881" y="933" width="1" height="3"/>
<rect x="887" y="933" width="1" height="3"/>
<rect x="893" y="933" width="1" height="3"/>
<rect x="900" y="933" width="1" height="3"/>
<rect x="906" y="933" width="1" height="3"/>
<rect x="912" y="933" width="1" height="3"/>
<rect x="919" y="933" width="1" height="3"/>
<rect x="925" y="933" width="1" height="3"/>
<rect x="931" y="933" width="1" height="3"/>
<rect x="938" y="933" width="1" height="3"/>
<rect x="944" y="933" width="1" height="3"/>
<rect x="950" y="933" width="1" height="5"/>
<rect x="957" y="933" width="1" height="3"/>
<rect x="963" y="933" width="1" height="3"/>
<rect x="970" y="933" width="1" height="3"/>
<rect x="976" y="933" width="1" height="3"/>
<rect x="982" y="933" width="1" height="3"/>
<rect x="989" y="933" width="1" height="3"/>
<rect x="995" y="933" width="1" height="3"/>
<rect x="1001" y="933" width="1" height="3"/>
<rect x="1008" y="933" width="1" height="3"/>
<rect x="1014" y="933" width="1" height="3"/>
<rect x="1020" y="933" width="1" height="3"/>
<rect x="1027" y="933" width="1" height="5"/>
<rect x="1033" y="933" width="1" height="3"/>
<rect x="1040" y="933" width="1" height="3"/>
<rect x="1046" y="933" width="1" height="3"/>
<rect x="1052" y="933" width="1" height="3"/>
<rect x="1059" y="933" width="1" height="3"/>
<rect x="1065" y="933" width="1" height="3"/>
<rect x="1071" y="933" width="1" height="3"/>
<rect x="1078" y="933" width="1" height="3"/>
<rect x="1084" y="933" width="1" height="3"/>
<rect x="1090" y="933" width="1" height="3"/>
<rect x="1097" y="933" width="1" height="3"/>
<rect x="1103" y="933" width="1" height="5"/>
<rect x="1110" y="933" width="1" height="3"/>
<rect x="1116" y="933" width="1" height="3"/>
<rect x="1122" y="933" width="1" height="3"/>
<rect x="1129" y="933" width="1" height="3"/>
<rect x="1135" y="933" width="1" height="3"/>
<rect x="1141" y="933" width="1" height="3"/>
<rect x="1148" y="933" width="1" height="3"/>
<rect x="1154" y="933" width="1" height="3"/>
<rect x="1160" y="933" width="1" height="3"/>
<rect x="1167" y="933" width="1" height="3"/>
<rect x="1173" y="933" width="1" height="3"/>
<rect x="1179" y="933" width="1" height="5"/>
<rect x="1186" y="933" width="1" height="3"/>
<rect x="1192" y="933" width="1" height="3"/>
<rect x="1199" y="933" width="1" height="3"/>
<rect x="1205" y="933" width="1" height="3"/>
<rect x="1211" y="933" width="1" height="3"/>
<rect x="1218" y="933" width="1" height="3"/>
<rect x="1224" y="933" width="1" height="3"/>
<rect x="1230" y="933" width="1" height="3"/>
<rect x="1237" y="933" width="1" height="3"/>
<rect x="1243" y="933" width="1" height="3"/>
<rect x="1249" y="933" width="1" height="3"/>
<rect x="1256" y="933" width="1" height="5"/>
<rect x="1262" y="933" width="1" height="3"/>
<rect x="1269" y="933" width="1" height="3"/>
<rect x="1275" y="933" width="1" height="3"/>
<rect x="1281" y="933" width="1" height="3"/>
<rect x="1288" y="933" width="1" height="3"/>
<rect x="1294" y="933" width="1" height="3"/>
<rect x="1300" y="933" width="1" height="3"/>
<rect x="1307" y="933" width="1" height="3"/>
<rect x="1313" y="933" width="1" height="3"/>
<rect x="1319" y="933" width="1" height="3"/>
<rect x="1326" y="933" width="1" height="3"/>
<rect x="1332" y="933" width="1" height="5"/>
<rect x="1339" y="933" width="1" height="3"/>
<rect x="1345" y="933" width="1" height="3"/>
<rect x="1351" y="933" width="1" height="3"/>
<rect x="1358" y="933" width="1" height="3"/>
<rect x="1364" y="933" width="1" height="3"/>
<rect x="1370" y="933" width="1" height="3"/>
<rect x="1377" y="933" width="1" height="3"/>
<rect x="1383" y="933" width="1" height="3"/>
<rect x="1389" y="933" width="1" height="3"/>
<rect x="1396" y="933" width="1" height="3"/>
<rect x="1402" y="933" width="1" height="3"/>
<rect x="1409" y="933" width="1" height="5"/>
<rect x="1415" y="933" width="1" height="3"/>
<rect x="1421" y="933" width="1" height="3"/>
<rect x="1428" y="933" width="1" height="3"/>
<rect x="1434" y="933" width="1" height="3"/>
<rect x="1440" y="933" width="1" height="3"/>
<rect x="1447" y="933" width="1" height="3"/>
<rect x="1453" y="933" width="1" height="3"/>
<rect x="1459" y="933" width="1" height="3"/>
<rect x="1466" y="933" width="1" height="3"/>
<rect x="1472" y="933" width="1" height="3"/>
<rect x="1478" y="933" width="1" height="3"/>
<rect x="1485" y="933" width="1" height="5"/>
<rect x="1491" y="933" width="1" height="3"/>
<rect x="1498" y="933" width="1" height="3"/>
<rect x="1504" y="933" width="1" height="3"/>
<rect x="1510" y="933" width="1" height="3"/>
<rect x="1517" y="933" width="1" height="3"/>
<rect x="1523" y="933" width="1" height="3"/>
<rect x="1529" y="933" width="1" height="3"/>
<rect x="1536" y="933" width="1" height="3"/>
<rect x="1542" y="933" width="1" height="3"/>
<rect x="1548" y="933" width="1" height="3"/>
<rect x="1555" y="933" width="1" height="3"/>
<rect x="1561" y="933" width="1" height="5"/>
<rect x="1568" y="933" width="1" height="3"/>
<rect x="1574" y="933" width="1" height="3"/>
<rect x="1580" y="933" width="1" height="3"/>
<rect x="1587" y="933" width="1" height="3"/>
<rect x="1593" y="933" width="1" height="3"/>
<rect x="1599" y="933" width="1" height="3"/>
<rect x="1606" y="933" width="1" height="3"/>
<rect x="1612" y="933" width="1" height="3"/>
<rect x="1618" y="933" width="1" height="3"/>
<rect x="1625" y="933" width="1" height="3"/>
<rect x="1631" y="933" width="1" height="3"/>
<rect x="1638" y="933" width="1" height="5"/>
<rect x="1644" y="933" width="1" height="3"/>
<rect x="1650" y="933" width="1" height="3"/>
<rect x="1657" y="933" width="1" height="3"/>
<rect x="1663" y="933" width="1" height="3"/>
<rect x="1669" y="933" width="1" height="3"/>
<rect x="1676" y="933" width="1" height="3"/>
<rect x="1682" y="933" width="1" height="3"/>
<rect x="1688" y="933" width="1" height="3"/>
<rect x="1695" y="933" width="1" height="3"/>
<rect x="1701" y="933" width="1" height="3"/>
<rect x="1707" y="933" width="1" height="3"/>
<rect x="1714" y="933" width="1" height="5"/>
<rect x="1720" y="933" width="1" height="3"/>
<rect x="1727" y="933" width="1" height="3"/>
<rect x="1733" y="933" width="1" height="3"/>
<rect x="1739" y="933" width="1" height="3"/>
<rect x="1746" y="933" width="1" height="3"/>
<rect x="1752" y="933" width="1" height="3"/>
<rect x="1758" y="933" width="1" height="3"/>
<rect x="1765" y="933" width="1" height="3"/>
<rect x="1771" y="933" width="1" height="3"/>
<rect x="1777" y="933" width="1" height="3"/>
<rect x="1784" y="933" width="1" height="3"/>
<rect x="1790" y="933" width="1" height="5"/>
<rect x="1797" y="933" width="1" height="3"/>
<rect x="1803" y="933" width="1" height="3"/>
<rect x="52" y="933" width="1" height="5"/><rect x="1803" y="933" width="1" height="5"/>
<rect x="45" y="930" width="5" height="1"/><rect x="1806" y="930" width="5" height="1"/>
<rect x="47" y="919" width="3" height="1"/><rect x="1806" y="919" width="3" height="1"/>
<rect x="45" y="909" width="5" height="1"/><rect x="1806" y="909" width="5" height="1"/>
<rect x="47" y="898" width="3" height="1"/><rect x="1806" y="898" width="3" height="1"/>
<rect x="45" y="887" width="5" height="1"/><rect x="1806" y="887" width="5" height="1"/>
<rect x="47" y="876" width="3" height="1"/><rect x="1806" y="876" width="3" height="1"/>
<rect x="45" y="866" width="5" height="1"/><rect x="1806" y="866" width="5" height="1"/>
<rect x="47" y="855" width="3" height="1"/><rect x="1806" y="855" width="3" height="1"/>
<rect x="45" y="844" width="5" height="1"/><rect x="1806" y="844" width="5" height="1"/>
<rect x="47" y="833" width="3" height="1"/><rect x="1806" y="833" width="3" height="1"/>
<rect x="45" y="823" width="5" height="1"/><rect x="1806" y="823" width="5" height="1"/>
<rect x="47" y="812" width="3" height="1"/><rect x="1806" y="812" width="3" height="1"/>
<rect x="45" y="801" width="5" height="1"/><rect x="1806" y="801" width="5" height="1"/>
<rect x="47" y="790" width="3" height="1"/><rect x="1806" y="790" width="3" height="1"/>
<rect x="45" y="780" width="5" height="1"/><rect x="1806" y="780" width="5" height="1"/>
<rect x="47" y="769" width="3" height="1"/><rect x="1806" y="769" width="3" height="1"/>
<rect x="45" y="758" width="5" height="1"/><rect x="1806" y="758" width="5" height="1"/>
<rect x="47" y="747" width="3" height="1"/><rect x="1806" y="747" width="3" height="1"/>
<rect x="45" y="737" width="5" height="1"/><rect x="1806" y="737" width="5" height="1"/>
<rect x="47" y="726" width="3" height="1"/><rect x="1806" y="726" width="3" height="1"/>
<rect x="45" y="715" width="5" height="1"/><rect x="1806" y="715" width="5" height="1"/>
<rect x="47" y="704" width="3" height="1"/><rect x="1806" y="704" width="3" height="1"/>
<rect x="45" y="693" width="5" height="1"/><rect x="1806" y="693" width="5" height="1"/>
<rect x="47" y="683" width="3" height="1"/><rect x="1806" y="683" width="3" height="1"/>
<rect x="45" y="672" width="5" height="1"/><rect x="1806" y="672" width="5" height="1"/>
<rect x="47" y="661" width="3" height="1"/><rect x="1806" y="661" width="3" height="1"/>
<rect x="45" y="650" width="5" height="1"/><rect x="1806" y="650" width="5" height="1"/>
<rect x="47" y="640" width="3" height="1"/><rect x="1806" y="640" width="3" height="1"/>
<rect x="45" y="629" width="5" height="1"/><rect x="1806" y="629" width="5" height="1"/>
<rect x="47" y="618" width="3" height="1"/><rect x="1806" y="618" width="3" height="1"/>
<rect x="45" y="607" width="5" height="1"/><rect x="1806" y="607" width="5" height="1"/>
<rect x="47" y="597" width="3" height="1"/><rect x="1806" y="597" width="3" height="1"/>
<rect x="45" y="586" width="5" height="1"/><rect x="1806" y="586" width="5" height="1"/>
<rect x="47" y="575" width="3" height="1"/><rect x="1806" y="575" width="3" height="1"/>
<rect x="45" y="564" width="5" height="1"/><rect x="1806" y="564" width="5" height="1"/>
<rect x="47" y="554" width="3" height="1"/><rect x="1806" y="554" width="3" height="1"/>
<rect x="45" y="543" width="5" height="1"/><rect x="1806" y="543" width="5" height="1"/>
<rect x="47" y="532" width="3" height="1"/><rect x="1806" y="532" width="3" height="1"/>
<rect x="45" y="521" width="5" height="1"/><rect x="1806" y="521" width="5" height="1"/>
<rect x="47" y="511" width="3" height="1"/><rect x="1806" y="511" width="3" height="1"/>
<rect x="45" y="500" width="5" height="1"/><rect x="1806" y="500" width="5" height="1"/>
<rect x="47" y="489" width="3" height="1"/><rect x="1806" y="489" width="3" height="1"/>
<rect x="45" y="478" width="5" height="1"/><rect x="1806" y="478" width="5" height="1"/>
<rect x="47" y="468" width="3" height="1"/><rect x="1806" y="468" width="3" height="1"/>
<rect x="45" y="457" width="5" height="1"/><rect x="1806" y="457" width="5" height="1"/>
<rect x="47" y="446" width="3" height="1"/><rect x="1806" y="446" width="3" height="1"/>
<rect x="45" y="435" width="5" height="1"/><rect x="1806" y="435" width="5" height="1"/>
<rect x="47" y="425" width="3" height="1"/><rect x="1806" y="425" width="3" height="1"/>
<rect x="45" y="414" width="5" height="1"/><rect x="1806" y="414" width="5" height="1"/>
<rect x="47" y="403" width="3" height="1"/><rect x="1806" y="403" width="3" height="1"/>
<rect x="45" y="392" width="5" height="1"/><rect x="1806" y="392" width="5" height="1"/>
<rect x="47" y="382" width="3" height="1"/><rect x="1806" y="382" width="3" height="1"/>
<rect x="45" y="371" width="5" height="1"/><rect x="1806" y="371" width="5" height="1"/>
<rect x="47" y="360" width="3" height="1"/><rect x="1806" y="360" width="3" height="1"/>
<rect x="45" y="349" width="5" height="1"/><rect x="1806" y="349" width="5" height="1"/>
<rect x="47" y="339" width="3" height="1"/><rect x="1806" y="339" width="3" height="1"/>
<rect x="45" y="328" width="5" height="1"/><rect x="1806" y="328" width="5" height="1"/>
<rect x="47" y="317" width="3" height="1"/><rect x="1806" y="317" width="3" height="1"/>
<rect x="45" y="306" width="5" height="1"/><rect x="1806" y="306" width="5" height="1"/>
<rect x="47" y="296" width="3" height="1"/><rect x="1806" y="296" width="3" height="1"/>
<rect x="45" y="285" width="5" height="1"/><rect x="1806" y="285" width="5" height="1"/>
<rect x="47" y="274" width="3" height="1"/><rect x="1806" y="274" width="3" height="1"/>
<rect x="45" y="263" width="5" height="1"/><rect x="1806" y="263" width="5" height="1"/>
<rect x="47" y="253" width="3" height="1"/><rect x="1806" y="253" width="3" height="1"/>
<rect x="45" y="242" width="5" height="1"/><rect x="1806" y="242" width="5" height="1"/>
<rect x="47" y="231" width="3" height="1"/><rect x="1806" y="231" width="3" height="1"/>
<rect x="45" y="220" width="5" height="1"/><rect x="1806" y="220" width="5" height="1"/>
<rect x="47" y="210" width="3" height="1"/><rect x="1806" y="210" width="3" height="1"/>
<rect x="45" y="199" width="5" height="1"/><rect x="1806" y="199" width="5" height="1"/>
<rect x="47" y="188" width="3" height="1"/><rect x="1806" y="188" width="3" height="1"/>
<rect x="45" y="177" width="5" height="1"/><rect x="1806" y="177" width="5" height="1"/>
<rect x="47" y="167" width="3" height="1"/><rect x="1806" y="167" width="3" height="1"/>
<rect x="45" y="156" width="5" height="1"/><rect x="1806" y="156" width="5" height="1"/>
<rect x="47" y="145" width="3" height="1"/><rect x="1806" y="145" width="3" height="1"/>
<rect x="45" y="134" width="5" height="1"/><rect x="1806" y="134" width="5" height="1"/>
<rect x="47" y="124" width="3" height="1"/><rect x="1806" y="124" width="3" height="1"/>
<rect x="45" y="113" width="5" height="1"/><rect x="1806" y="113" width="5" height="1"/>
<rect x="47" y="102" width="3" height="1"/><rect x="1806" y="102" width="3" height="1"/>
<rect x="45" y="91" width="5" height="1"/><rect x="1806" y="91" width="5" height="1"/>
<rect x="47" y="81" width="3" height="1"/><rect x="1806" y="81" width="3" height="1"/>
<rect x="45" y="70" width="5" height="1"/><rect x="1806" y="70" width="5" height="1"/>
<rect x="1841" y="936.5" width="18" height="3.5" fill="#fff"/>
</g>
<rect x="1841" y="74" width="18" height="3" fill="#e8407c"/>
<rect x="1841" y="79" width="18" height="857" fill="url(#cb)"/>
<g opacity="0.996">
<g class="b">
<text x="808.6" y="16" textLength="22.8" lengthAdjust="spacingAndGlyphs">AOS</text>
<text x="837.7" y="16" textLength="126.7" lengthAdjust="spacingAndGlyphs">Thu 16 Apr 2026 11:30:35</text>
<text x="970.7" y="16" textLength="23.2" lengthAdjust="spacingAndGlyphs">AOS</text>
<text x="717.4" y="28" textLength="105.2" lengthAdjust="spacingAndGlyphs">CoordSystem:121f05</text>
<text x="831.4" y="28" textLength="82.0" lengthAdjust="spacingAndGlyphs">SensorID:121f05</text>
<text x="925.7" y="28" textLength="47.7" lengthAdjust="spacingAndGlyphs">Axis:sum</text>
<text x="986.1" y="28" textLength="97.5" lengthAdjust="spacingAndGlyphs">Windowing:Hanning</text>
<text x="618.6" y="40" textLength="78.2" lengthAdjust="spacingAndGlyphs">Cuttoff(Hz):200</text>
<text x="714.4" y="40" textLength="66.7" lengthAdjust="spacingAndGlyphs">df(Hz):0.2441</text>
<text x="799.4" y="40" textLength="80.4" lengthAdjust="spacingAndGlyphs">Sample/Sec:500</text>
<text x="900.2" y="40" textLength="72.6" lengthAdjust="spacingAndGlyphs">PSD size:2048</text>
<text x="993.6" y="40" textLength="64.2" lengthAdjust="spacingAndGlyphs">Overlap(%):0</text>
<text x="1081.9" y="40" textLength="101.5" lengthAdjust="spacingAndGlyphs">TimeRes.(sec):4.096</text>
</g>
<text class="m" transform="translate(52.5,61.0) scale(0.98,1)">1911</text>
<text class="m" transform="translate(93.5,61.0) scale(0.98,1)">1950</text>
<text class="m" transform="translate(145.5,61.0) scale(0.98,1)">2000</text>
<text class="m" transform="translate(197.5,61.0) scale(0.98,1)">2050</text>
<text class="m" transform="translate(249.5,61.0) scale(0.98,1)">2100</text>
<text class="m" transform="translate(302.5,61.0) scale(0.98,1)">2150</text>
<text class="m" transform="translate(354.5,61.0) scale(0.98,1)">2200</text>
<text class="m" transform="translate(406.5,61.0) scale(0.98,1)">2250</text>
<text class="m" transform="translate(458.5,61.0) scale(0.98,1)">2300</text>
<text class="m" transform="translate(510.5,61.0) scale(0.98,1)">2350</text>
<text class="m" transform="translate(562.5,61.0) scale(0.98,1)">2400</text>
<text class="m" transform="translate(614.5,61.0) scale(0.98,1)">2450</text>
<text class="m" transform="translate(666.5,61.0) scale(0.98,1)">2500</text>
<text class="m" transform="translate(718.5,61.0) scale(0.98,1)">2550</text>
<text class="m" transform="translate(771.5,61.0) scale(0.98,1)">2600</text>
<text class="m" transform="translate(823.5,61.0) scale(0.98,1)">2650</text>
<text class="m" transform="translate(875.5,61.0) scale(0.98,1)">2700</text>
<text class="m" transform="translate(927.5,61.0) scale(0.98,1)">2750</text>
<text class="m" transform="translate(979.5,61.0) scale(0.98,1)">2800</text>
<text class="m" transform="translate(1031.5,61.0) scale(0.98,1)">2850</text>
<text class="m" transform="translate(1083.5,61.0) scale(0.98,1)">2900</text>
<text class="m" transform="translate(1135.5,61.0) scale(0.98,1)">2950</text>
<text class="m" transform="translate(1187.5,61.0) scale(0.98,1)">3000</text>
<text class="m" transform="translate(1240.5,61.0) scale(0.98,1)">3050</text>
<text class="m" transform="translate(1292.5,61.0) scale(0.98,1)">3100</text>
<text class="m" transform="translate(1344.5,61.0) scale(0.98,1)">3150</text>
<text class="m" transform="translate(1396.5,61.0) scale(0.98,1)">3200</text>
<text class="m" transform="translate(1448.5,61.0) scale(0.98,1)">3250</text>
<text class="m" transform="translate(1500.5,61.0) scale(0.98,1)">3300</text>
<text class="m" transform="translate(1552.5,61.0) scale(0.98,1)">3350</text>
<text class="m" transform="translate(1604.5,61.0) scale(0.98,1)">3400</text>
<text class="m" transform="translate(1656.5,61.0) scale(0.98,1)">3450</text>
<text class="m" transform="translate(1709.5,61.0) scale(0.98,1)">3500</text>
<text class="m" transform="translate(1761.5,61.0) scale(0.98,1)">3550</text>
<text class="m" transform="translate(1803.5,61.0) scale(0.98,1)">3591</text>
<text class="m" transform="translate(52.5,948.0) scale(0.98,1)">09:36:09.045</text>
<text class="m" transform="translate(52.5,960.0) scale(0.98,1)">04/16/2026</text>
<text class="m" transform="translate(187.5,948.0) scale(0.98,1)">09:45:00.000</text>
<text class="m" transform="translate(187.5,960.0) scale(0.98,1)">04/16/2026</text>
<text class="m" transform="translate(263.5,948.0) scale(0.98,1)">09:50:00.000</text>
<text class="m" transform="translate(263.5,960.0) scale(0.98,1)">04/16/2026</text>
<text class="m" transform="translate(340.5,948.0) scale(0.98,1)">09:55:00.000</text>
<text class="m" transform="translate(340.5,960.0) scale(0.98,1)">04/16/2026</text>
<text class="m" transform="translate(416.5,948.0) scale(0.98,1)">10:00:00.000</text>
<text class="m" transform="translate(416.5,960.0) scale(0.98,1)">04/16/2026</text>
<text class="m" transform="translate(492.5,948.0) scale(0.98,1)">10:05:00.000</text>
<text class="m" transform="translate(492.5,960.0) scale(0.98,1)">04/16/2026</text>
<text class="m" transform="translate(569.5,948.0) scale(0.98,1)">10:10:00.000</text>
<text class="m" transform="translate(569.5,960.0) scale(0.98,1)">04/16/2026</text>
<text class="m" transform="translate(645.5,948.0) scale(0.98,1)">10:15:00.000</text>
<text class="m" transform="translate(645.5,960.0) scale(0.98,1)">04/16/2026</text>
<text class="m" transform="translate(721.5,948.0) scale(0.98,1)">10:20:00.000</text>
<text class="m" transform="translate(721.5,960.0) scale(0.98,1)">04/16/2026</text>
<text class="m" transform="translate(798.5,948.0) scale(0.98,1)">10:25:00.000</text>
<text class="m" transform="translate(798.5,960.0) scale(0.98,1)">04/16/2026</text>
<text class="m" transform="translate(874.5,948.0) scale(0.98,1)">10:30:00.000</text>
<text class="m" transform="translate(874.5,960.0) scale(0.98,1)">04/16/2026</text>
<text class="m" transform="translate(950.5,948.0) scale(0.98,1)">10:35:00.000</text>
<text class="m" transform="translate(950.5,960.0) scale(0.98,1)">04/16/2026</text>
<text class="m" transform="translate(1027.5,948.0) scale(0.98,1)">10:40:00.000</text>
<text class="m" transform="translate(1027.5,960.0) scale(0.98,1)">04/16/2026</text>
<text class="m" transform="translate(1103.5,948.0) scale(0.98,1)">10:45:00.000</text>
<text class="m" transform="translate(1103.5,960.0) scale(0.98,1)">04/16/2026</text>
<text class="m" transform="translate(1179.5,948.0) scale(0.98,1)">10:50:00.000</text>
<text class="m" transform="translate(1179.5,960.0) scale(0.98,1)">04/16/2026</text>
<text class="m" transform="translate(1256.5,948.0) scale(0.98,1)">10:55:00.000</text>
<text class="m" transform="translate(1256.5,960.0) scale(0.98,1)">04/16/2026</text>
<text class="m" transform="translate(1332.5,948.0) scale(0.98,1)">11:00:00.000</text>
<text class="m" transform="translate(1332.5,960.0) scale(0.98,1)">04/16/2026</text>
<text class="m" transform="translate(1409.5,948.0) scale(0.98,1)">11:05:00.000</text>
<text class="m" transform="translate(1409.5,960.0) scale(0.98,1)">04/16/2026</text>
<text class="m" transform="translate(1485.5,948.0) scale(0.98,1)">11:10:00.000</text>
<text class="m" transform="translate(1485.5,960.0) scale(0.98,1)">04/16/2026</text>
<text class="m" transform="translate(1561.5,948.0) scale(0.98,1)">11:15:00.000</text>
<text class="m" transform="translate(1561.5,960.0) scale(0.98,1)">04/16/2026</text>
<text class="m" transform="translate(1638.5,948.0) scale(0.98,1)">11:20:00.000</text>
<text class="m" transform="translate(1638.5,960.0) scale(0.98,1)">04/16/2026</text>
<text class="m" transform="translate(1714.5,948.0) scale(0.98,1)">11:25:00.000</text>
<text class="m" transform="translate(1714.5,960.0) scale(0.98,1)">04/16/2026</text>
<text class="m" transform="translate(1803.5,948.0) scale(0.98,1)">11:30:50.326</text>
<text class="m" transform="translate(1803.5,960.0) scale(0.98,1)">04/16/2026</text>
<text class="m" transform="translate(924.6,974.0) scale(0.88,1)">Time</text>
<text class="e" transform="translate(43.4,933.6) scale(0.98,1)">0</text>
<text class="e" transform="translate(43.4,912.6) scale(0.98,1)">5</text>
<text class="e" transform="translate(43.4,890.6) scale(0.98,1)">10</text>
<text class="e" transform="translate(43.4,869.6) scale(0.98,1)">15</text>
<text class="e" transform="translate(43.4,847.6) scale(0.98,1)">20</text>
<text class="e" transform="translate(43.4,826.6) scale(0.98,1)">25</text>
<text class="e" transform="translate(43.4,804.6) scale(0.98,1)">30</text>
<text class="e" transform="translate(43.4,783.6) scale(0.98,1)">35</text>
<text class="e" transform="translate(43.4,761.6) scale(0.98,1)">40</text>
<text class="e" transform="translate(43.4,740.6) scale(0.98,1)">45</text>
<text class="e" transform="translate(43.4,718.6) scale(0.98,1)">50</text>
<text class="e" transform="translate(43.4,696.6) scale(0.98,1)">55</text>
<text class="e" transform="translate(43.4,675.6) scale(0.98,1)">60</text>
<text class="e" transform="translate(43.4,653.6) scale(0.98,1)">65</text>
<text class="e" transform="translate(43.4,632.6) scale(0.98,1)">70</text>
<text class="e" transform="translate(43.4,610.6) scale(0.98,1)">75</text>
<text class="e" transform="translate(43.4,589.6) scale(0.98,1)">80</text>
<text class="e" transform="translate(43.4,567.6) scale(0.98,1)">85</text>
<text class="e" transform="translate(43.4,546.6) scale(0.98,1)">90</text>
<text class="e" transform="translate(43.4,524.6) scale(0.98,1)">95</text>
<text class="e" transform="translate(43.4,503.6) scale(0.98,1)">100</text>
<text class="e" transform="translate(43.4,481.6) scale(0.98,1)">105</text>
<text class="e" transform="translate(43.4,460.6) scale(0.98,1)">110</text>
<text class="e" transform="translate(43.4,438.6) scale(0.98,1)">115</text>
<text class="e" transform="translate(43.4,417.6) scale(0.98,1)">120</text>
<text class="e" transform="translate(43.4,395.6) scale(0.98,1)">125</text>
<text class="e" transform="translate(43.4,374.6) scale(0.98,1)">130</text>
<text class="e" transform="translate(43.4,352.6) scale(0.98,1)">135</text>
<text class="e" transform="translate(43.4,331.6) scale(0.98,1)">140</text>
<text class="e" transform="translate(43.4,309.6) scale(0.98,1)">145</text>
<text class="e" transform="translate(43.4,288.6) scale(0.98,1)">150</text>
<text class="e" transform="translate(43.4,266.6) scale(0.98,1)">155</text>
<text class="e" transform="translate(43.4,245.6) scale(0.98,1)">160</text>
<text class="e" transform="translate(43.4,223.6) scale(0.98,1)">165</text>
<text class="e" transform="translate(43.4,202.6) scale(0.98,1)">170</text>
<text class="e" transform="translate(43.4,180.6) scale(0.98,1)">175</text>
<text class="e" transform="translate(43.4,159.6) scale(0.98,1)">180</text>
<text class="e" transform="translate(43.4,137.6) scale(0.98,1)">185</text>
<text class="e" transform="translate(43.4,116.6) scale(0.98,1)">190</text>
<text class="e" transform="translate(43.4,94.6) scale(0.98,1)">195</text>
<text class="e" transform="translate(43.4,73.6) scale(0.98,1)">200</text>
<text transform="translate(1869.0,83.4) scale(0.98,1)">-5.00</text>
<text transform="translate(1869.0,511.4) scale(0.98,1)">-9.00</text>
<text transform="translate(1869.0,939.4) scale(0.98,1)">-13.00</text>
<text class="m" style="font-size:12px" transform="translate(1909.4,507.6) rotate(90) scale(.915,1)">Amplitude(Log10(g^2/Hz))</text>
</g>
</svg></body></html>
